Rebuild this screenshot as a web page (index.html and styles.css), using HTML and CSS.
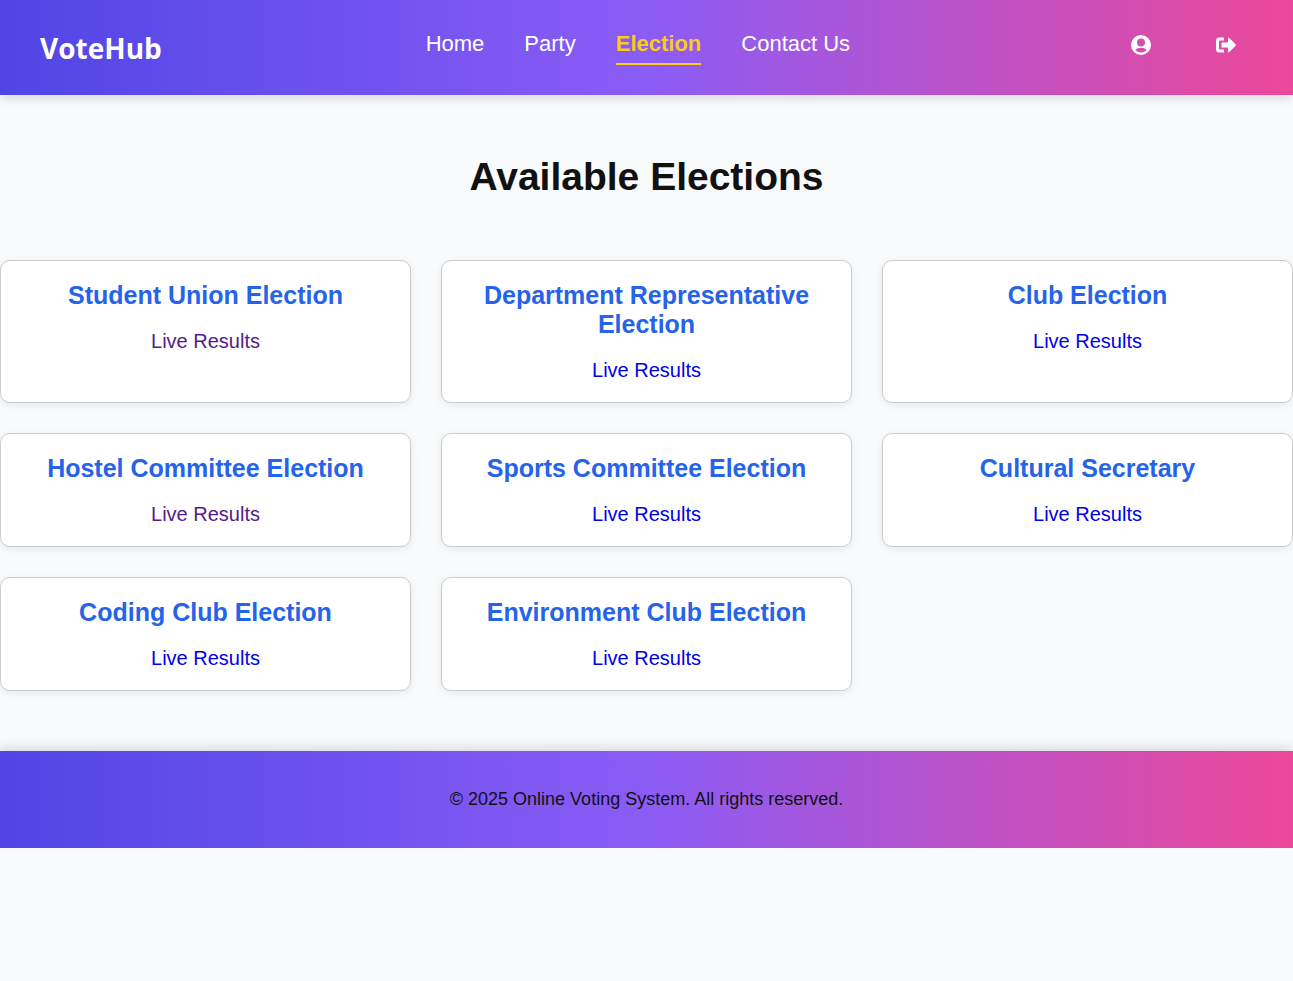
FILE: index.html
```html
<!DOCTYPE html>
<html lang="en">
<head>
  <meta charset="utf-8">
  <meta name="viewport" content="width=device-width, initial-scale=1">
  <title>VoteHub - Elections</title>
  <link rel="stylesheet" href="styles.css">
</head>
<body>
  <header class="site-header">
    <div class="logo">VoteHub</div>
    <nav class="nav" aria-label="Main">
      <a class="nav-link" href="#home">Home</a>
      <a class="nav-link" href="#party">Party</a>
      <a class="nav-link active" href="#election" aria-current="page">Election</a>
      <a class="nav-link" href="#contact">Contact Us</a>
    </nav>
    <div class="actions">
      <button class="icon-button" type="button" aria-label="Profile">
        <svg class="icon" viewBox="0 0 20 20" aria-hidden="true"><path fill-rule="evenodd" d="M10 0a10 10 0 1 0 0 20a10 10 0 0 0 0-20zM10 3.500a4 4 0 1 1 0 8a4 4 0 0 1 0-8zM10 17.500c-2.400 0-4.500-1-5.500-2.500c1-1.500 3-2.200 5.500-2.200s4.500.7 5.500 2.200c-1 1.500-3.100 2.500-5.500 2.500z"/></svg>
      </button>
      <button class="icon-button" type="button" aria-label="Log out">
        <svg class="icon" viewBox="0 0 20 20" aria-hidden="true"><path d="M8 2.500H3.500Q0 2.500 0 6v8q0 3.500 3.500 3.500H8v-3H4q-1 0-1-1v-7q0-1 1-1h4z"/><path d="M5.500 7.500H12V3q0-1 1-.3l6.600 6.600q.6.700 0 1.400L13 17.300q-1 .7-1-.3v-4.500H5.500z"/></svg>
      </button>
    </div>
  </header>

  <main class="content">
    <h1 class="page-title">Available Elections</h1>
    <div class="election-grid">
      <article class="card">
        <h2 class="card-title">Student Union Election</h2>
        <a class="results-link seen" href="#student-union">Live Results</a>
      </article>
      <article class="card">
        <h2 class="card-title">Department Representative Election</h2>
        <a class="results-link" href="#department">Live Results</a>
      </article>
      <article class="card">
        <h2 class="card-title">Club Election</h2>
        <a class="results-link" href="#club">Live Results</a>
      </article>
      <article class="card">
        <h2 class="card-title">Hostel Committee Election</h2>
        <a class="results-link seen" href="#hostel">Live Results</a>
      </article>
      <article class="card">
        <h2 class="card-title">Sports Committee Election</h2>
        <a class="results-link" href="#sports">Live Results</a>
      </article>
      <article class="card">
        <h2 class="card-title">Cultural Secretary</h2>
        <a class="results-link" href="#cultural">Live Results</a>
      </article>
      <article class="card">
        <h2 class="card-title">Coding Club Election</h2>
        <a class="results-link" href="#coding">Live Results</a>
      </article>
      <article class="card">
        <h2 class="card-title">Environment Club Election</h2>
        <a class="results-link" href="#environment">Live Results</a>
      </article>
    </div>
  </main>

  <footer class="site-footer">
    <p class="copyright">© 2025 Online Voting System. All rights reserved.</p>
  </footer>
</body>
</html>
```

FILE: styles.css
```css
* {
  box-sizing: border-box;
}

body {
  margin: 0;
  background: #f9fafb;
  color: #111;
  font-family: "Liberation Sans", Arial, sans-serif;
}

.site-header,
.site-footer {
  background: linear-gradient(to right, #4f46e5, #8b5cf6, #ec4899);
}

.site-header {
  display: flex;
  align-items: center;
  justify-content: space-between;
  min-height: 95px;
  padding: 20px 40px;
  box-shadow: 0 4px 10px rgba(0, 0, 0, 0.12);
}

.logo {
  color: #fff;
  font-family: "Open Sans", "Noto Sans", sans-serif;
  font-size: 28px;
  font-weight: 700;
  line-height: 40px;
}

.nav {
  display: flex;
  gap: 40px;
}

.nav-link {
  padding-bottom: 6px;
  border-bottom: 2px solid transparent;
  color: #fff;
  font-size: 22px;
  line-height: 27px;
  text-decoration: none;
}

.nav-link.active {
  border-color: #facc15;
  color: #facc15;
  font-weight: 700;
}

.actions {
  display: flex;
  gap: 31px;
  padding-bottom: 5px;
}

.icon-button {
  display: flex;
  padding: 8px 17px;
  border: 0;
  background: none;
  color: #fff;
  cursor: pointer;
}

.icon {
  width: 20px;
  height: 20px;
  fill: currentColor;
}

.content {
  padding: 60px 0;
}

.page-title {
  margin: 0 0 62px;
  font-size: 39px;
  line-height: 43px;
  text-align: center;
}

.election-grid {
  display: grid;
  grid-template-columns: repeat(auto-fit, minmax(350px, 1fr));
  gap: 30px;
}

.card {
  padding: 20px;
  border: 1px solid #ccc;
  border-radius: 10px;
  background: #fff;
  box-shadow: 0 2px 8px rgba(0, 0, 0, 0.08);
  text-align: center;
}

.card-title {
  margin: 0 0 20px;
  color: #2563eb;
  font-size: 25px;
  line-height: 29px;
}

.results-link {
  display: inline-block;
  color: #0000ee;
  font-size: 20px;
  line-height: 23px;
  text-decoration: none;
  vertical-align: top;
}

.results-link.seen {
  color: #551a8b;
}

.site-footer {
  padding: 38px 20px;
  box-shadow: 0 -4px 10px rgba(0, 0, 0, 0.12);
}

.copyright {
  margin: 0;
  font-size: 18px;
  line-height: 21px;
  text-align: center;
}
```
